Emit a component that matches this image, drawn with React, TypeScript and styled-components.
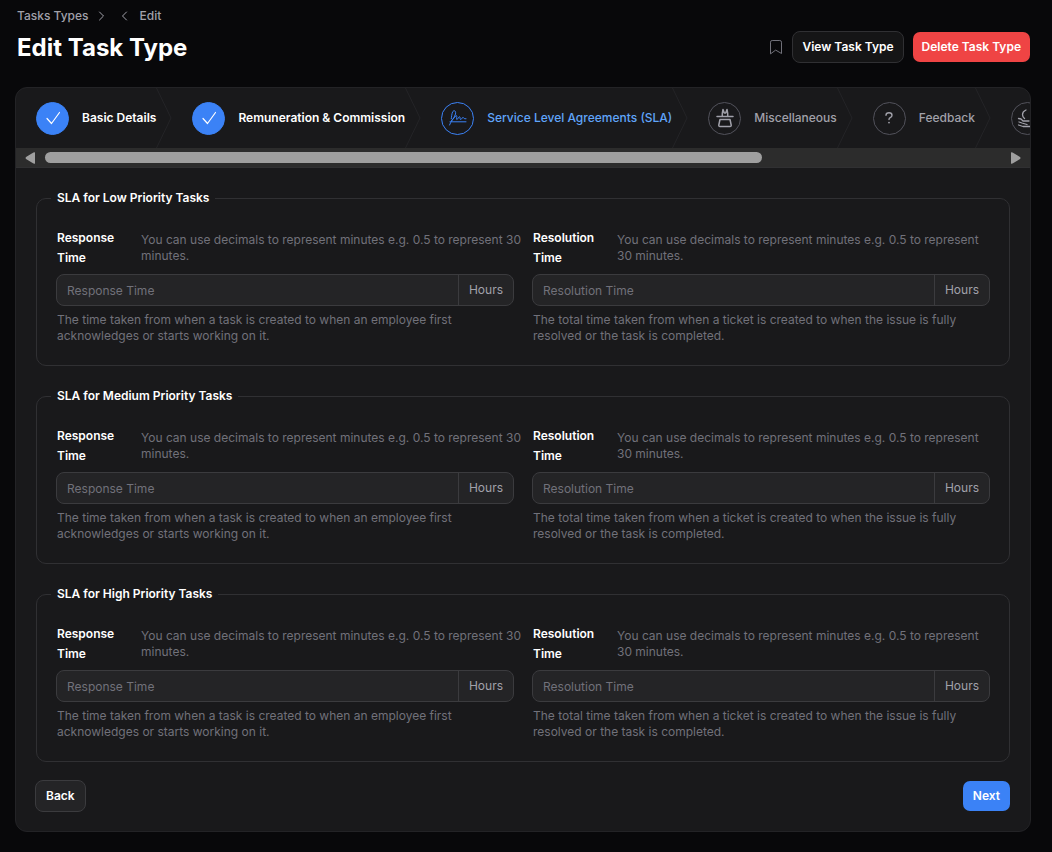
import React from "react";
import styled, { createGlobalStyle, css } from "styled-components";

const GlobalStyle = createGlobalStyle`
  * { box-sizing: border-box; }
  body {
    margin: 0;
    background: #08080a;
    color: #ffffff;
    font-family: Inter, "Liberation Sans", sans-serif;
    font-size: 12px;
    line-height: 20px;
  }
  button, input { font-family: inherit; font-size: inherit; }
`;

const Page = styled.div`
  padding: 6px 21px 20px 15px;
`;

const Header = styled.header`
  display: flex;
  align-items: flex-end;
  justify-content: space-between;
  padding: 0 1px 0 2px;
  margin-bottom: 24px;
`;

const Breadcrumb = styled.nav`
  display: flex;
  align-items: center;
  color: #a1a1aa;
  font-weight: 500;

  a { color: inherit; text-decoration: none; }
  svg { margin-left: 9px; }
  svg + svg { margin-left: 16px; margin-right: 12px; }
`;

const Title = styled.h1`
  margin: 6px 0 0;
  font-size: 24px;
  line-height: 31px;
  font-weight: 700;
`;

const Actions = styled.div`
  display: flex;
  align-items: center;
  gap: 9px;
`;

const IconButton = styled.button`
  display: flex;
  padding: 0;
  border: 0;
  background: none;
  color: #71717a;
  cursor: pointer;
`;

const Button = styled.button<{ $tone: "outline" | "soft" | "danger" | "primary" }>`
  padding: 5px 10px;
  border: 0;
  border-radius: 7px;
  color: #ffffff;
  font-weight: 600;
  line-height: 20px;
  white-space: nowrap;
  cursor: pointer;
  ${({ $tone }) => $tone === "outline" && css`padding: 5px 9px; background: #151516; border: 1px solid #303033; border-radius: 8px;`}
  ${({ $tone }) => $tone === "soft" && css`background: #242426; border: 1px solid #3b3b3e; border-radius: 8px;`}
  ${({ $tone }) => $tone === "danger" && css`padding: 5px 9px; background: #ef4444;`}
  ${({ $tone }) => $tone === "primary" && css`background: #3b82f6;`}
`;

const Card = styled.main`
  border: 1px solid #232326;
  border-radius: 12px;
  background: #19191b;
  overflow: hidden;
`;

const Steps = styled.ol`
  display: flex;
  margin: 0;
  padding: 0;
  height: 60px;
  list-style: none;
  overflow: hidden;
`;

type StepState = "done" | "current" | "todo";

const StepItem = styled.li<{ $state: StepState }>`
  display: flex;
  flex: none;
  align-items: center;
  padding-left: 20px;
  font-weight: ${({ $state }) => ($state === "done" ? 600 : 500)};
  color: ${({ $state }) => ({ done: "#ffffff", current: "#60a5fa", todo: "#a1a1aa" })[$state]};
`;

const StepLink = styled.a`
  display: flex;
  align-items: center;
  gap: 13px;
  color: inherit;
  text-decoration: none;
  white-space: nowrap;
`;

const StepCircle = styled.span<{ $state: StepState }>`
  display: flex;
  align-items: center;
  justify-content: center;
  width: 33px;
  height: 33px;
  border-radius: 50%;
  border: 1px solid ${({ $state }) => ($state === "todo" ? "#52525b" : "#3b82f6")};
  background: ${({ $state }) => ($state === "done" ? "#3b82f6" : "transparent")};
  color: ${({ $state }) => ({ done: "#ffffff", current: "#3b82f6", todo: "#a1a1aa" })[$state]};
`;

const Divider = styled.svg`
  color: #242427;
`;

const ScrollTrack = styled.div`
  display: flex;
  align-items: center;
  height: 20px;
  padding: 0 9px;
  gap: 10px;
  background: #2c2c2c;
  color: #9f9f9f;
  border-bottom: 1px solid #303032;
`;

const ScrollLane = styled.div`
  flex: 1;
`;

const ScrollThumb = styled.div`
  width: 75%;
  height: 11px;
  border-radius: 6px;
  background: #9f9f9f;
`;

const Form = styled.form`
  padding: 20px 20px 19px;
`;

const Group = styled.fieldset`
  display: grid;
  grid-template-columns: 1fr 1fr;
  gap: 18px;
  min-width: 0;
  margin: 0 0 20px;
  padding: 20px 19px 21px;
  border: 1px solid #303033;
  border-radius: 10px;

  &:last-of-type { margin-bottom: 18px; }
`;

const Legend = styled.legend`
  margin-left: -5px;
  padding: 0 6px;
  font-weight: 600;
`;

const Field = styled.div`
  min-width: 0;
`;

const FieldHead = styled.div`
  display: grid;
  grid-template-columns: 80px 1fr;
  gap: 4px;
  padding-left: 1px;
  margin-bottom: 6px;
`;

const Label = styled.label`
  font-weight: 600;
`;

const Hint = styled.p`
  margin: 0;
  color: #71717a;
  line-height: 16px;
  padding-top: 4px;
  white-space: pre;
`;

const InputGroup = styled.div`
  display: flex;
  height: 32px;
  border: 1px solid #3b3b3e;
  border-radius: 8px;
  background: #242426;
  overflow: hidden;
`;

const TextInput = styled.input`
  flex: 1;
  min-width: 0;
  padding: 0 10px;
  border: 0;
  outline: 0;
  background: transparent;
  color: #ffffff;
  &::placeholder { color: #71717a; opacity: 1; }
`;

const Addon = styled.span`
  padding: 5px 10px;
  border-left: 1px solid #3b3b3e;
  color: #a1a1aa;
`;

const Help = styled.p`
  margin: 6px 0 0;
  padding-left: 1px;
  color: #71717a;
  line-height: 16px;
`;

const Footer = styled.div`
  display: flex;
  align-items: center;
  justify-content: space-between;
  margin-left: -1px;
`;

const stroke = { fill: "none", stroke: "currentColor", strokeLinecap: "round", strokeLinejoin: "round" } as const;

const Chevron = ({ d }: { d: string }) => (
  <svg width="7" height="10" viewBox="0 0 7 10" aria-hidden="true">
    <path d={d} {...stroke} />
  </svg>
);

const BookmarkIcon = () => (
  <svg width="14" height="16" viewBox="0 0 14 16" aria-hidden="true">
    <path d="M1.500 14.500V3.200Q1.500 1.500 3.200 1.500H10.800Q12.500 1.500 12.500 3.200V14.500L7 11.300Z" {...stroke} />
  </svg>
);

const CheckIcon = () => (
  <svg width="16" height="16" viewBox="0 0 16 16" aria-hidden="true">
    <path d="M2 8.500L6.500 13.500L14.500 2.500" {...stroke} strokeWidth="1.200" />
  </svg>
);

const SignatureIcon = () => (
  <svg width="20" height="18" viewBox="0 0 20 18" aria-hidden="true">
    <path d="M1.500 16C2.500 12.500 6.500 9 7.500 5C8.300 1.800 5.800 0.600 4.600 3C3.600 5 3.600 8.500 3.300 9.800M3.500 11.500C5.500 10.500 7 7 8.300 6.600C9.500 6.400 8 10.300 8.800 10.500C9.800 10.600 10.500 7.800 11.500 7.700C12.700 7.700 11.500 10.500 12.500 10.500C13.800 10.500 13.800 8.500 15 8.500C16.200 8.500 15.500 10.300 18 9.800M2 12.800H18" {...stroke} />
  </svg>
);

const HatIcon = () => (
  <svg width="20" height="20" viewBox="0 0 20 20" aria-hidden="true">
    <path d="M2 8.500H18M5 11.500H15L16.200 17Q16.400 18.500 15 18.500H5Q3.600 18.500 3.800 17ZM7.300 8V5.500L8 1.500L9.300 5H10.700L12 1.500L12.700 5.500V8" {...stroke} strokeWidth="1.500" />
  </svg>
);

const QuestionIcon = () => (
  <svg width="10" height="14" viewBox="0 0 10 14" aria-hidden="true">
    <path d="M2 4.200Q2 1.700 5 1.700Q8 1.700 8 4.200Q8 5.700 6.200 6.600Q5 7.200 5 8.600" {...stroke} strokeWidth="1.400" />
    <circle cx="5" cy="11.600" r="0.900" fill="currentColor" />
  </svg>
);

const HandIcon = () => (
  <svg width="20" height="20" viewBox="0 0 20 20" aria-hidden="true">
    <path d="M9 2Q5.500 3.500 5.500 6.500Q5.500 9 7.500 10.500M1.500 10.500L4 11L6 13H12M2 14L5 15L10 16.500M1.500 17L6 18.500H14" {...stroke} strokeWidth="1.300" />
  </svg>
);

const steps: { label: string; state: StepState; icon: React.ReactNode }[] = [
  { label: "Basic Details", state: "done", icon: <CheckIcon /> },
  { label: "Remuneration & Commission", state: "done", icon: <CheckIcon /> },
  { label: "Service Level Agreements (SLA)", state: "current", icon: <SignatureIcon /> },
  { label: "Miscellaneous", state: "todo", icon: <HatIcon /> },
  { label: "Feedback", state: "todo", icon: <QuestionIcon /> },
  { label: "", state: "todo", icon: <HandIcon /> },
];

const fields = [
  {
    name: "Response Time",
    hint: "You can use decimals to represent minutes e.g. 0.5 to represent 30\nminutes.",
    help: "The time taken from when a task is created to when an employee first acknowledges or starts working on it.",
  },
  {
    name: "Resolution Time",
    hint: "You can use decimals to represent minutes e.g. 0.5 to represent\n30 minutes.",
    help: "The total time taken from when a ticket is created to when the issue is fully resolved or the task is completed.",
  },
];

const priorities = ["Low", "Medium", "High"];

function SlaGroup({ priority }: { priority: string }) {
  return (
    <Group>
      <Legend>SLA for {priority} Priority Tasks</Legend>
      {fields.map(({ name, hint, help }) => {
        const id = `${priority}-${name}`.toLowerCase().replace(/ /g, "-");
        return (
          <Field key={id}>
            <FieldHead>
              <Label htmlFor={id}>{name}</Label>
              <Hint>{hint}</Hint>
            </FieldHead>
            <InputGroup>
              <TextInput id={id} type="text" placeholder={name} />
              <Addon>Hours</Addon>
            </InputGroup>
            <Help>{help}</Help>
          </Field>
        );
      })}
    </Group>
  );
}

export default function App() {
  return (
    <Page>
      <GlobalStyle />
      <Header>
        <div>
          <Breadcrumb aria-label="Breadcrumb">
            <a href="#types">Tasks Types</a>
            <Chevron d="M1.500 1L5.500 5L1.500 9" />
            <Chevron d="M5.500 1L1.500 5L5.500 9" />
            <a href="#edit">Edit</a>
          </Breadcrumb>
          <Title>Edit Task Type</Title>
        </div>
        <Actions>
          <IconButton type="button" aria-label="Bookmark"><BookmarkIcon /></IconButton>
          <Button type="button" $tone="outline">View Task Type</Button>
          <Button type="button" $tone="danger">Delete Task Type</Button>
        </Actions>
      </Header>
      <Card>
        <Steps>
          {steps.map(({ label, state, icon }) => (
            <StepItem key={label || "more"} $state={state}>
              <StepLink href="#step" aria-label={label || "More"}>
                <StepCircle $state={state}>{icon}</StepCircle>
                {label}
              </StepLink>
              <Divider width="16" height="60" viewBox="0 0 16 60" aria-hidden="true">
                <path d="M0.500 0L15 30L0.500 60" fill="none" stroke="currentColor" />
              </Divider>
            </StepItem>
          ))}
        </Steps>
        <ScrollTrack aria-hidden="true">
          <svg width="10" height="12" viewBox="0 0 10 12"><path d="M10 0.500V11.500Q9 12 8 11.300L1 7Q0 6 1 5L8 0.700Q9 0 10 0.500Z" fill="currentColor" /></svg>
          <ScrollLane><ScrollThumb /></ScrollLane>
          <svg width="10" height="12" viewBox="0 0 10 12"><path d="M0 0.500V11.500Q1 12 2 11.300L9 7Q10 6 9 5L2 0.700Q1 0 0 0.500Z" fill="currentColor" /></svg>
        </ScrollTrack>
        <Form onSubmit={(e) => e.preventDefault()}>
          {priorities.map((p) => <SlaGroup key={p} priority={p} />)}
          <Footer>
            <Button type="button" $tone="soft">Back</Button>
            <Button type="submit" $tone="primary">Next</Button>
          </Footer>
        </Form>
      </Card>
    </Page>
  );
}
